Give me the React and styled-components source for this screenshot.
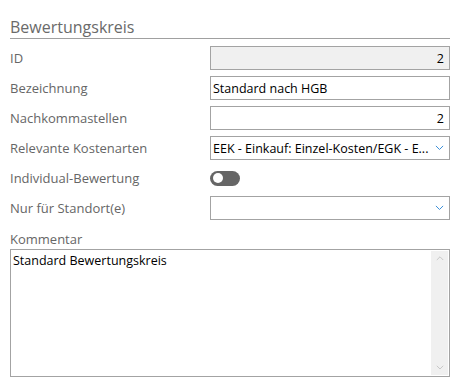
import styled, { createGlobalStyle } from "styled-components";

const Global = createGlobalStyle`
  html, body { margin: 0; padding: 0; background: #fff; }
  body { font-family: "Open Sans", "Noto Sans", Arial, sans-serif; }
`;

const Page = styled.div`
  width: 453px;
  height: 382px;
  box-sizing: border-box;
  padding: 17px 3px 0 10px;
  display: flex;
  flex-direction: column;
`;

const Title = styled.h2`
  margin: 0;
  font-size: 16px;
  font-weight: 500;
  color: #6a6a6a;
  line-height: 20px;
  padding-bottom: 1px;
  border-bottom: 1px solid #a0a0a0;
`;

const Form = styled.div`
  margin-top: 7px;
  display: flex;
  flex-direction: column;
  gap: 6px;
`;

const Row = styled.div`
  display: grid;
  grid-template-columns: 200px 240px;
  align-items: center;
  height: 24px;
`;

const Label = styled.label`
  font-size: 13px;
  font-weight: 500;
  color: #666;
`;

const Field = styled.div`
  box-sizing: border-box;
  height: 24px;
  border: 1px solid #a3a3a3;
  background: ${p => (p.disabled ? "#f0f0f0" : "#fff")};
  display: flex;
  align-items: center;
  justify-content: ${p => (p.right ? "flex-end" : "space-between")};
  padding: 0 5px 0 2px;
  font-size: 12.5px;
  color: #000;
  gap: 4px;
`;

const FieldText = styled.span`
  white-space: nowrap;
`;

const Toggle = styled.div`
  width: 30px;
  height: 15px;
  border-radius: 8px;
  background: #666;
  display: flex;
  align-items: center;
  padding-left: 3px;
  box-sizing: border-box;
`;

const Knob = styled.span`
  width: 10px;
  height: 10px;
  border-radius: 50%;
  background: #fff;
`;

const CommentLabel = styled(Label)`
  margin-top: 10px;
  line-height: 18px;
  display: block;
`;

const CommentBox = styled.div`
  height: 128px;
  margin-top: 1px;
  box-sizing: border-box;
  border: 1px solid #a3a3a3;
  display: flex;
`;

const CommentText = styled.div`
  flex: 1;
  padding: 2px;
  font-size: 12.5px;
  color: #000;
`;

const ScrollTrack = styled.div`
  width: 17px;
  margin: 1px 1px 1px 0;
  background: #f0f0f0;
  display: flex;
  flex-direction: column;
  justify-content: space-between;
  align-items: center;
  padding: 5px 0;
`;

const Chevron = ({ up, color = "#3b8fd8", size = 9 }) => (
  <svg width={size} height={size * 0.6} viewBox="0 0 10 6" fill="none">
    <path
      d={up ? "M1 5 L5 1 L9 5" : "M1 1 L5 5 L9 1"}
      stroke={color}
      strokeWidth="1.1"
    />
  </svg>
);

export default function App() {
  return (
    <Page>
      <Global />
      <Title>Bewertungskreis</Title>
      <Form>
        <Row>
          <Label>ID</Label>
          <Field disabled right>2</Field>
        </Row>
        <Row>
          <Label>Bezeichnung</Label>
          <Field>Standard nach HGB</Field>
        </Row>
        <Row>
          <Label>Nachkommastellen</Label>
          <Field right>2</Field>
        </Row>
        <Row>
          <Label>Relevante Kostenarten</Label>
          <Field>
            <FieldText>EEK - Einkauf: Einzel-Kosten/EGK - E...</FieldText>
            <Chevron />
          </Field>
        </Row>
        <Row>
          <Label>Individual-Bewertung</Label>
          <Toggle><Knob /></Toggle>
        </Row>
        <Row>
          <Label>Nur für Standort(e)</Label>
          <Field>
            <span />
            <Chevron />
          </Field>
        </Row>
      </Form>
      <CommentLabel>Kommentar</CommentLabel>
      <CommentBox>
        <CommentText>Standard Bewertungskreis</CommentText>
        <ScrollTrack>
          <Chevron up color="#c2c2c2" size={8} />
          <Chevron color="#c2c2c2" size={8} />
        </ScrollTrack>
      </CommentBox>
    </Page>
  );
}
